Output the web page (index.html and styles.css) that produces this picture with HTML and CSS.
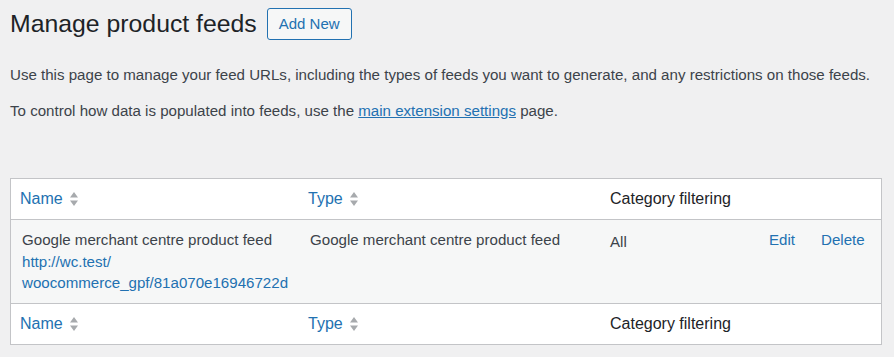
FILE: index.html
```html
<!DOCTYPE html>
<html lang="en">
<head>
    <meta charset="UTF-8">
    <meta name="viewport" content="width=device-width, initial-scale=1.0">
    <title>Manage product feeds</title>
    <link rel="stylesheet" href="styles.css">
</head>
<body>
    <div class="wrap">
        <div class="page-header">
            <h1 class="page-title">Manage product feeds</h1>
            <a href="#" class="add-new">Add New</a>
        </div>

        <p class="intro">Use this page to manage your feed URLs, including the types of feeds you want to generate, and any restrictions on those feeds.</p>
        <p class="intro">To control how data is populated into feeds, use the <a href="#">main extension settings</a> page.</p>

        <table class="feeds">
            <colgroup>
                <col class="col-name">
                <col class="col-type">
                <col class="col-cat">
                <col class="col-edit">
                <col class="col-delete">
            </colgroup>
            <thead>
                <tr>
                    <th><a href="#" class="sortable">Name <svg class="sort-icon" viewBox="0 0 10 16" width="10" height="16"><path d="M1 6.5 L5 1 L9 6.5 Z M1 9.5 L9 9.5 L5 15 Z"/></svg></a></th>
                    <th><a href="#" class="sortable">Type <svg class="sort-icon" viewBox="0 0 10 16" width="10" height="16"><path d="M1 6.5 L5 1 L9 6.5 Z M1 9.5 L9 9.5 L5 15 Z"/></svg></a></th>
                    <th>Category filtering</th>
                    <th></th>
                    <th></th>
                </tr>
            </thead>
            <tbody>
                <tr class="alternate">
                    <td>Google merchant centre product feed<br><a href="#">http://wc.test/<br>woocommerce_gpf/81a070e16946722d</a></td>
                    <td>Google merchant centre product feed</td>
                    <td class="cat">All</td>
                    <td><a href="#">Edit</a></td>
                    <td><a href="#">Delete</a></td>
                </tr>
            </tbody>
            <tfoot>
                <tr>
                    <th><a href="#" class="sortable">Name <svg class="sort-icon" viewBox="0 0 10 16" width="10" height="16"><path d="M1 6.5 L5 1 L9 6.5 Z M1 9.5 L9 9.5 L5 15 Z"/></svg></a></th>
                    <th><a href="#" class="sortable">Type <svg class="sort-icon" viewBox="0 0 10 16" width="10" height="16"><path d="M1 6.5 L5 1 L9 6.5 Z M1 9.5 L9 9.5 L5 15 Z"/></svg></a></th>
                    <th>Category filtering</th>
                    <th></th>
                    <th></th>
                </tr>
            </tfoot>
        </table>
    </div>
</body>
</html>
```

FILE: styles.css
```css
* {
    margin: 0;
    padding: 0;
    box-sizing: border-box;
}

body {
    font-family: 'Liberation Sans', Arial, sans-serif;
    background: #f0f0f1;
    color: #3c434a;
    font-size: 14px;
}

a {
    color: #2271b1;
    text-decoration: none;
}

.wrap {
    padding: 8px 12px 0 10px;
}

.page-header {
    display: flex;
    align-items: center;
    gap: 10px;
    height: 32px;
}

.page-title {
    font-size: 24.8px;
    font-weight: 400;
    color: #1d2327;
    line-height: 32px;
}

.add-new {
    display: inline-block;
    height: 32px;
    line-height: 30px;
    padding: 0 11px;
    font-size: 15px;
    border: 1px solid #2271b1;
    border-radius: 3px;
    background: #f6f7f7;
}

.intro {
    font-size: 15.1px;
    line-height: 21px;
    margin-top: 23.5px;
}

.intro + .intro {
    margin-top: 15px;
}

.intro a {
    text-decoration: underline;
}

.feeds {
    width: 872px;
    margin-top: 57.5px;
    table-layout: fixed;
    border-spacing: 0;
    border: 1px solid #c3c4c7;
    background: #fff;
}

.col-name { width: 288px; }
.col-type { width: 302px; }
.col-cat { width: 157px; }
.col-edit { width: 52px; }
.col-delete { width: 71px; }

.feeds th {
    text-align: left;
    font-weight: 400;
    font-size: 16px;
    color: #1d2327;
    line-height: 22px;
    padding: 9px 9px;
}

.feeds thead th {
    border-bottom: 1px solid #c3c4c7;
}

.feeds tfoot th {
    border-top: 1px solid #c3c4c7;
}

.sortable {
    display: inline-flex;
    align-items: center;
    gap: 6px;
}

.sort-icon {
    fill: #a7aaad;
}

.feeds td {
    vertical-align: top;
    font-size: 15.1px;
    line-height: 21.5px;
    padding: 9px 11px 9px 11px;
}

.feeds td.cat {
    padding-left: 9px;
    padding-top: 11px;
}

.alternate {
    background: #f6f7f7;
}
```
